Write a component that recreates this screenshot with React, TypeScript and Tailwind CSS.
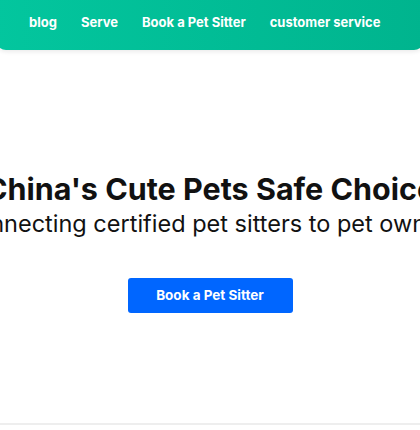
import React from 'react';

const navItems = ['blog', 'Serve', 'Book a Pet Sitter', 'customer service'];

const App: React.FC = () => {
  return (
    <div className="w-[420px] h-[430px] overflow-hidden bg-white font-['Inter',sans-serif] text-[#111]">
      <header className="h-[50px] -mx-1 rounded-b-[10px] bg-gradient-to-r from-[#03c69e] to-[#00b48e] shadow-[0_2px_4px_rgba(0,0,0,0.08)] flex items-center">
        <nav className="flex gap-6 pl-[33px] pb-[4px]">
          {navItems.map(item => (
            <a key={item} className="text-white text-[13px] font-bold whitespace-nowrap">{item}</a>
          ))}
        </nav>
      </header>

      <section className="h-[373px] flex flex-col items-center pt-[120px]">
        <h1 className="whitespace-nowrap text-[30.5px] font-bold leading-[38px]">China's Cute Pets Safe Choice</h1>
        <p className="whitespace-nowrap text-[23.5px] leading-[28px] mt-[2px]">Connecting certified pet sitters to pet owners</p>
        <button className="mt-[40px] w-[165px] h-[35px] rounded-[3px] bg-[#0066ff] text-white text-[13.5px] font-bold">
          Book a Pet Sitter
        </button>
      </section>

      <div className="h-[2px] bg-[#eeeeee]" />
    </div>
  );
};

export default App;
